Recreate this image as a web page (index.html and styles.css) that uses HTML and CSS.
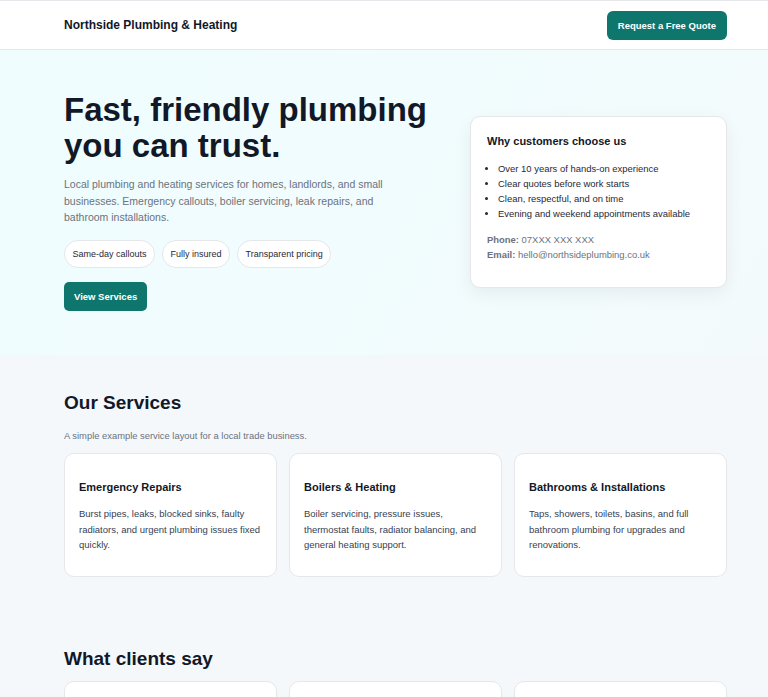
FILE: index.html
```html
<!DOCTYPE html>
<html lang="en">
<head>
<meta charset="utf-8">
<title>Northside Plumbing &amp; Heating</title>
<link rel="stylesheet" href="styles.css">
</head>
<body>
<header class="site-header">
  <div class="container header-inner">
    <div class="brand">Northside Plumbing &amp; Heating</div>
    <a class="btn" href="#">Request a Free Quote</a>
  </div>
</header>

<section class="hero">
  <div class="container hero-grid">
    <div class="hero-copy">
      <h1>Fast, friendly plumbing you can trust.</h1>
      <p class="lead">Local plumbing and heating services for homes, landlords, and small businesses. Emergency callouts, boiler servicing, leak repairs, and bathroom installations.</p>
      <div class="pills">
        <span class="pill">Same-day callouts</span>
        <span class="pill">Fully insured</span>
        <span class="pill">Transparent pricing</span>
      </div>
      <a class="btn btn-hero" href="#">View Services</a>
    </div>
    <aside class="why-card">
      <h3>Why customers choose us</h3>
      <ul>
        <li>Over 10 years of hands-on experience</li>
        <li>Clear quotes before work starts</li>
        <li>Clean, respectful, and on time</li>
        <li>Evening and weekend appointments available</li>
      </ul>
      <p class="contact"><strong>Phone:</strong> 07XXX XXX XXX<br><strong>Email:</strong> hello@northsideplumbing.co.uk</p>
    </aside>
  </div>
</section>

<section class="section">
  <div class="container">
    <h2>Our Services</h2>
    <p class="sub">A simple example service layout for a local trade business.</p>
    <div class="cards">
      <div class="card">
        <h3>Emergency Repairs</h3>
        <p>Burst pipes, leaks, blocked sinks, faulty radiators, and urgent plumbing issues fixed quickly.</p>
      </div>
      <div class="card">
        <h3>Boilers &amp; Heating</h3>
        <p>Boiler servicing, pressure issues, thermostat faults, radiator balancing, and general heating support.</p>
      </div>
      <div class="card">
        <h3>Bathrooms &amp; Installations</h3>
        <p>Taps, showers, toilets, basins, and full bathroom plumbing for upgrades and renovations.</p>
      </div>
    </div>
  </div>
</section>

<section class="section">
  <div class="container">
    <h2>What clients say</h2>
    <div class="cards">
      <div class="card quote"><p>&ldquo;Quick response and a tidy job.&rdquo;</p></div>
      <div class="card quote"><p>&ldquo;Fair price and very professional.&rdquo;</p></div>
      <div class="card quote"><p>&ldquo;Sorted our boiler the same day.&rdquo;</p></div>
    </div>
  </div>
</section>
</body>
</html>
```

FILE: styles.css
```css
* { box-sizing: border-box; }
html, body { margin: 0; padding: 0; }
body {
  font-family: "Liberation Sans", Arial, sans-serif;
  color: #111827;
  background: #f5f8fb;
  line-height: 1.5;
}
.container {
  margin-left: 64px;
  margin-right: 41px;
}
.site-header {
  background: #fff;
  border-top: 1px solid #e5e7eb;
  border-bottom: 1px solid #e5e7eb;
}
.header-inner {
  display: flex;
  align-items: center;
  justify-content: space-between;
  height: 48px;
}
.brand {
  font-weight: 700;
  font-size: 12px;
}
.btn {
  display: inline-block;
  background: #0f766e;
  color: #fff;
  text-decoration: none;
  font-weight: 700;
  font-size: 9.5px;
  line-height: 29px;
  height: 29px;
  padding: 0 11px;
  border-radius: 6px;
}
.hero {
  background: linear-gradient(120deg, #effdfe 0%, #f1fcfd 55%, #f4fafc 100%);
  padding: 42px 0 44px;
}
.hero-grid {
  display: grid;
  grid-template-columns: 1fr 257px;
  gap: 32px;
  align-items: center;
}
.hero h1 {
  font-size: 33px;
  line-height: 36px;
  margin: 0 0 12px;
}
.lead {
  color: #6b7280;
  font-size: 10.5px;
  line-height: 16.5px;
  margin: 0 0 14.5px;
  max-width: 340px;
}
.pills {
  display: flex;
  gap: 7px;
  margin-bottom: 14px;
}
.pill {
  background: #fff;
  border: 1px solid #e5e7eb;
  border-radius: 999px;
  font-size: 9px;
  height: 28px;
  line-height: 26px;
  padding: 0 7.5px;
  color: #1f2937;
}
.btn-hero {
  padding: 0 10px;
  border-radius: 5px;
}
.why-card {
  background: #fff;
  border: 1px solid #e5e7eb;
  border-radius: 10px;
  box-shadow: 0 6px 18px rgba(15, 23, 42, 0.06);
  padding: 16px 16px 25px;
}
.why-card h3 {
  font-size: 11px;
  margin: 0 0 12px;
  line-height: 16px;
}
.why-card ul {
  margin: 0 0 11px;
  padding-left: 11px;
  font-size: 9.45px;
  line-height: 15px;
  color: #1f2937;
}
.contact {
  margin: 0;
  font-size: 9.45px;
  line-height: 15px;
  color: #6b7280;
}
.section {
  padding: 36px 0 34px;
}
.section h2 {
  font-size: 19px;
  line-height: 24px;
  margin: 0 0 10px;
}
.sub {
  color: #6b7280;
  font-size: 9.4px;
  line-height: 14px;
  margin: 14px 0 10px;
}
.cards {
  display: grid;
  grid-template-columns: repeat(3, 1fr);
  gap: 12px;
}
.card {
  background: #fff;
  border: 1px solid #e5e7eb;
  border-radius: 10px;
  padding: 25px 14px 15px;
}
.card.quote {
  padding-top: 30px;
}
.card h3 {
  font-size: 11px;
  line-height: 16px;
  margin: 0 0 11px;
}
.card p {
  font-size: 9.5px;
  line-height: 15.5px;
  color: #374151;
  margin: 0 0 8px;
}
```
